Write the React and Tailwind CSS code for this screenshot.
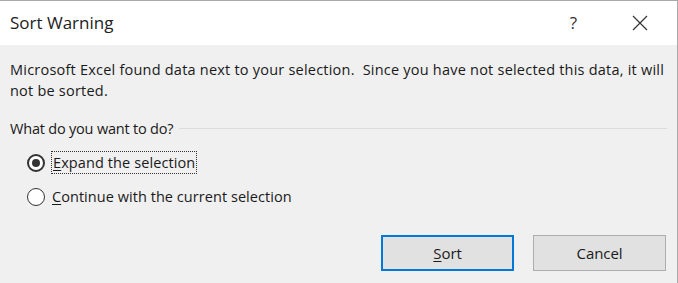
export default function App() {
  return (
    <div className="flex h-[283px] w-[678px] flex-col overflow-hidden border-t border-r border-[#a9a9a9] bg-[#f0f0f0] font-['Open_Sans',sans-serif] text-[#1a1a1a]">
      <div className="flex h-[44px] shrink-0 items-center bg-white pl-[10px]">
        <span className="text-[17px] text-[#222]">Sort Warning</span>
        <span className="ml-auto mr-[55px] text-[17px] text-[#333]">?</span>
        <svg width="16" height="16" viewBox="0 0 16 16" className="mr-[29px]">
          <path d="M1 1 L15 15 M15 1 L1 15" stroke="#333" strokeWidth="1.2" fill="none" />
        </svg>
      </div>

      <div className="flex flex-1 flex-col px-[10px] pt-[14px] text-[14.5px] leading-[21px] tracking-[-0.1px]">
        <p className="whitespace-nowrap tracking-[0.22px]">
          Microsoft Excel found data next to your selection.&nbsp; Since you have not selected this data, it will
          <br />
          not be sorted.
        </p>

        <div className="mt-[17px] flex items-center gap-[6px]">
          <span className="tracking-[-0.2px]">What do you want to do?</span>
          <div className="h-px flex-1 bg-[#dcdcdc]" />
        </div>

        <div className="mt-[12px] flex flex-col gap-[12px] pl-[17px]">
          <label className="flex items-center gap-[6px]">
            <span className="flex h-[18px] w-[18px] items-center justify-center rounded-full border-2 border-[#333] bg-white">
              <span className="h-[8px] w-[8px] rounded-full bg-[#333]" />
            </span>
            <span className="border border-dotted border-[#333] px-[1px] tracking-[0.1px]">
              <u className="underline-offset-2">E</u>xpand the selection
            </span>
          </label>
          <label className="flex items-center gap-[7px]">
            <span className="h-[18px] w-[18px] rounded-full border border-[#333] bg-white" />
            <span className="tracking-[0.05px]">
              <u className="underline-offset-2">C</u>ontinue with the current selection
            </span>
          </label>
        </div>

        <div className="mt-auto mb-[12px] flex justify-end gap-[19px] pr-[1px]">
          <button className="h-[36px] w-[133px] border-2 border-[#0078d7] bg-[#e1e1e1] text-[15px]">
            <u className="underline-offset-2">S</u>ort
          </button>
          <button className="h-[36px] w-[133px] border border-[#adadad] bg-[#e1e1e1] text-[15px]">Cancel</button>
        </div>
      </div>
    </div>
  )
}
